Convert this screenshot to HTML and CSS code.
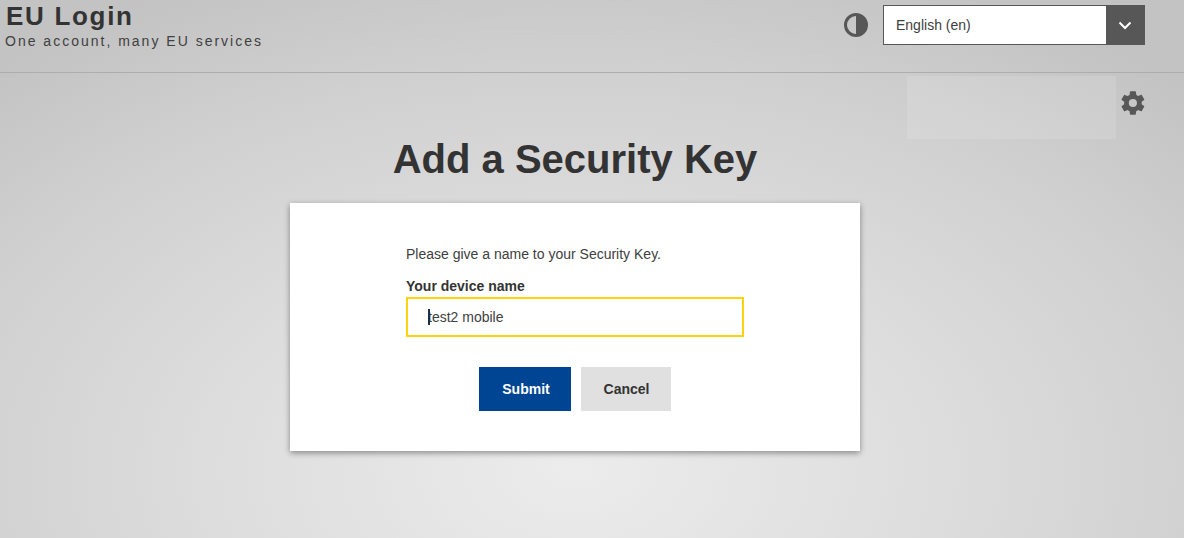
FILE: index.html
```html
<!DOCTYPE html>
<html lang="en">
<head>
  <meta charset="UTF-8">
  <title>EU Login</title>
  <link rel="stylesheet" href="styles.css">
</head>
<body>

  <header class="topbar">
    <div class="brand">
      <div class="brand-name">EU Login</div>
      <div class="brand-tag">One account, many EU services</div>
    </div>
    <div class="topbar-tools">
      <svg class="contrast-icon" width="26" height="26" viewBox="0 0 26 26">
        <circle cx="13" cy="13" r="10.500" fill="none" stroke="#575757" stroke-width="3"/>
        <path d="M13 2a11 11 0 0 1 0 22z" fill="#575757"/>
      </svg>
      <div class="lang-select">
        <span class="lang-value">English (en)</span>
        <span class="lang-arrow">
          <svg width="14" height="9" viewBox="0 0 14 9">
            <path d="M1.500 1.500L7 7l5.500-5.500" fill="none" stroke="#fff" stroke-width="2"/>
          </svg>
        </span>
      </div>
    </div>
  </header>

  <div class="subbar">
    <div class="notice-box"></div>
    <svg class="gear" width="28" height="28" viewBox="0 0 24 24">
      <path fill="#575757" d="M19.400 13c.04-.33.06-.66.06-1s-.02-.67-.06-1l2.100-1.650c.19-.15.24-.42.12-.64l-2-3.460c-.12-.22-.39-.3-.61-.22l-2.490 1c-.52-.4-1.080-.73-1.690-.98l-.38-2.650A.49.49 0 0 0 13.900 2h-4c-.25 0-.46.18-.49.42l-.38 2.650c-.61.25-1.170.59-1.690.98l-2.490-1c-.23-.09-.49 0-.61.22l-2 3.460c-.13.22-.07.49.12.64L4.460 11c-.04.33-.07.67-.07 1s.03.67.07 1l-2.100 1.650c-.19.15-.25.42-.12.64l2 3.460c.12.22.38.3.61.22l2.490-1c.52.4 1.080.73 1.690.98l.38 2.650c.03.24.24.42.49.42h4c.25 0 .46-.18.49-.42l.38-2.650c.61-.25 1.170-.59 1.690-.98l2.490 1c.22.08.49 0 .61-.22l2-3.460c.12-.22.07-.49-.12-.64L19.400 13zM11.900 15.500a3.500 3.500 0 1 1 0-7 3.500 3.500 0 0 1 0 7z"/>
    </svg>
  </div>

  <main class="content">
    <h1 class="page-title">Add a Security Key</h1>
    <div class="card">
      <form class="card-form">
        <p class="intro">Please give a name to your Security Key.</p>
        <label class="field-label" for="deviceName">Your device name</label>
        <div class="field-wrap">
          <input class="field" id="deviceName" type="text" value="test2 mobile">
          <span class="caret"></span>
        </div>
        <div class="actions">
          <button class="btn btn-primary" type="button">Submit</button>
          <button class="btn btn-secondary" type="button">Cancel</button>
        </div>
      </form>
    </div>
  </main>

</body>
</html>
```

FILE: styles.css
```css
html, body {
  height: 100%;
}

body {
  margin: 0;
  height: 538px;
  overflow: hidden;
  font-family: "Liberation Sans", Arial, sans-serif;
  color: #333;
  background: radial-gradient(ellipse 860px 540px at 575px 470px, #ececec 0%, #dedede 40%, #d0d0d0 75%, #c3c3c3 100%);
}

.topbar {
  height: 72px;
  border-bottom: 1px solid #adadad;
  display: flex;
  justify-content: space-between;
  padding: 0 39px 0 5px;
}

.brand-name {
  font-size: 26px;
  line-height: 30px;
  font-weight: bold;
  letter-spacing: 1.7px;
  margin-top: 1px;
  margin-left: 1px;
}

.brand-tag {
  font-size: 14px;
  line-height: 16px;
  letter-spacing: 2px;
  color: #404040;
  margin-top: 2px;
}

.topbar-tools {
  display: flex;
  align-items: flex-start;
  gap: 14px;
  padding-top: 5px;
}

.contrast-icon {
  margin-top: 7px;
}

.lang-select {
  width: 262px;
  height: 40px;
  box-sizing: border-box;
  background: #fff;
  border: 1px solid #575757;
  display: flex;
  justify-content: space-between;
}

.lang-value {
  font-size: 14px;
  line-height: 38px;
  padding-left: 12px;
  color: #404040;
}

.lang-arrow {
  width: 38px;
  background: #575757;
  display: flex;
  align-items: center;
  justify-content: center;
}

.subbar {
  display: flex;
  justify-content: flex-end;
  gap: 3px;
  padding: 3px 37px 0 0;
  height: 63px;
}

.notice-box {
  width: 209px;
  height: 63px;
  background: rgba(255, 255, 255, 0.12);
}

.gear {
  margin-top: 13px;
}

.content {
  display: flex;
  flex-direction: column;
  align-items: center;
  padding-right: 34px;
}

.page-title {
  margin: -3px 0 0;
  font-size: 40px;
  line-height: 46px;
  font-weight: bold;
  color: #333;
}

.card {
  margin-top: 21px;
  width: 570px;
  height: 248px;
  box-sizing: border-box;
  background: #fff;
  padding: 43px 116px 0 116px;
  box-shadow: 0 2px 6px rgba(0, 0, 0, 0.4);
}

.intro {
  margin: 0;
  font-size: 14px;
  line-height: 16px;
  color: #404040;
}

.field-label {
  display: block;
  margin-top: 16px;
  font-size: 14px;
  line-height: 16px;
  font-weight: bold;
}

.field-wrap {
  position: relative;
  margin-top: 3px;
}

.field {
  display: block;
  width: 100%;
  height: 40px;
  box-sizing: border-box;
  border: 2px solid #fdd30f;
  outline: none;
  padding: 0 20px;
  font-family: inherit;
  font-size: 14px;
  color: #404040;
  background: #fff;
}

.caret {
  position: absolute;
  left: 22px;
  top: 12px;
  width: 2px;
  height: 16px;
  background: #1c2f4a;
}

.actions {
  display: flex;
  justify-content: center;
  gap: 10px;
  margin-top: 30px;
}

.btn {
  height: 44px;
  border: none;
  font-family: inherit;
  font-size: 14px;
  font-weight: bold;
  padding: 0;
}

.btn-primary {
  width: 92px;
  padding-left: 2px;
  background: #004494;
  color: #fff;
}

.btn-secondary {
  width: 90px;
  padding-left: 1px;
  background: #e0e0e0;
  color: #333;
}
```
